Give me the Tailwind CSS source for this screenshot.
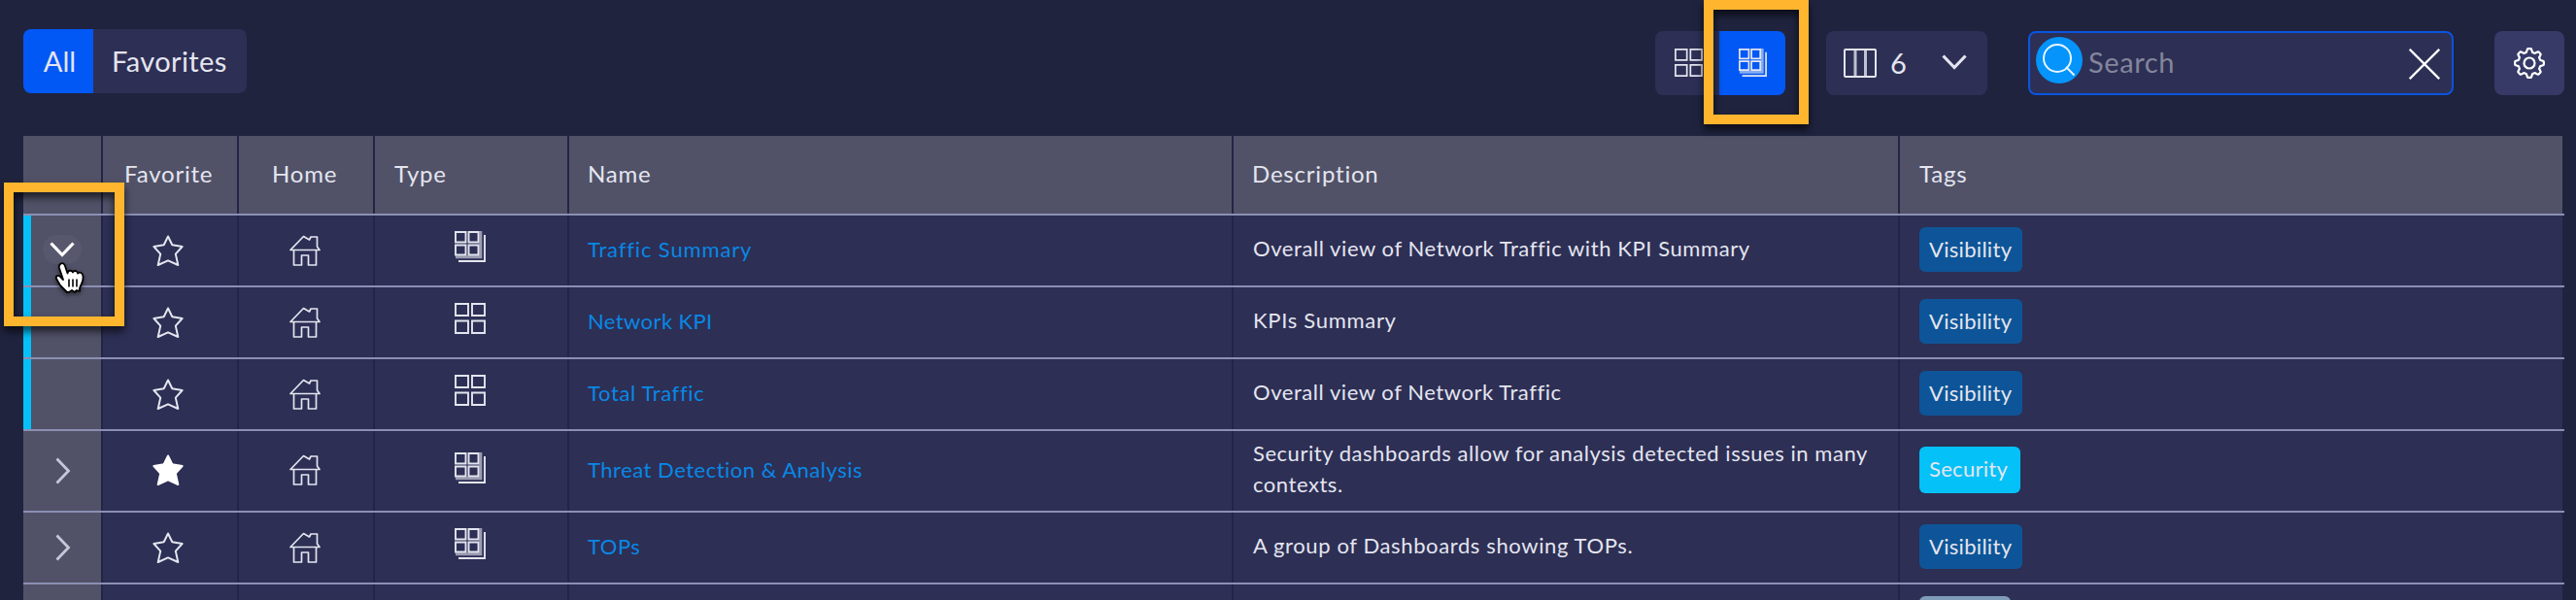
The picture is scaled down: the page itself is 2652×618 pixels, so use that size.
<!DOCTYPE html>
<html lang="en">
<head>
<meta charset="utf-8">
<title>Dashboards</title>
<script src="https://cdn.jsdelivr.net/npm/@tailwindcss/browser@4"></script>
</head>
<body class="bg-[#1f233e]">
<div class="relative h-[618px] w-[2652px] overflow-hidden bg-[#1f233e] font-[Lato,'Open_Sans',sans-serif] text-[#e4e5ef]">
<svg class="hidden">
  <defs>
    <symbol id="star" viewBox="0 0 32 32"><path d="M16 1.500 20.300 10.300 30.600 12 23.800 19.600 26.300 31 16 26.300 5.700 31 8.200 19.600 1.400 12 11.700 10.300Z" stroke="currentColor" stroke-width="2" stroke-linejoin="round"/></symbol>
    <symbol id="house" viewBox="0 0 32 32"><g fill="none" stroke="currentColor" stroke-width="1.700" stroke-linejoin="round" stroke-linecap="round"><path d="M1 15.500 14.500 1.500 20.500 5 22 2H28.500V12L31 15.500Z"/><path d="M4.500 16V31H12.500V21H19.500V31H27.500V16"/></g></symbol>
    <symbol id="grid" viewBox="0 0 32 32"><path d="M1 1H14V13H1ZM18 1H31V13H18ZM1 18.500H14V31H1ZM18 18.500H31V31H18Z" fill="none" stroke="currentColor" stroke-width="1.900"/></symbol>
    <symbol id="stack" viewBox="0 0 32 32"><g fill="none" stroke="currentColor" stroke-width="1.900"><path d="M1 1H11.500V11.500H1ZM14.500 1H24.500V11.500H14.500ZM1 14.500H11.500V24.500H1ZM14.500 14.500H24.500V24.500H14.500Z"/><path d="M26.800 0V26.800H1" stroke-width="3" stroke-opacity=".6"/><path d="M31 4V31H4"/></g></symbol>
    <symbol id="right" viewBox="0 0 16 28"><path d="M1.500 1.500 13.500 14 1.500 26.500" fill="none" stroke="currentColor" stroke-width="2.800"/></symbol>
    <symbol id="down" viewBox="0 0 26 16"><path d="M1.500 1.500 13 13.500 24.500 1.500" fill="none" stroke="currentColor" stroke-width="3.200"/></symbol>
  </defs>
</svg>

<header class="flex h-[140px] items-start pl-6 pt-[30px] text-[29px] leading-[66px]">
  <div class="flex h-[66px] overflow-hidden rounded-lg bg-[#2d2f55]">
    <button class="w-[72px] bg-[#0258f5] pl-[3px] text-center">All</button>
    <button class="w-[158px] pl-[19px] text-left tracking-[0.4px]">Favorites</button>
  </div>
  <div class="ml-[1450px] mt-0.5 flex h-[66px] overflow-hidden rounded-lg bg-[#2d2f55]">
    <button class="flex w-[66px] pl-5 pt-[18px]"><svg class="h-[29px] w-[29px]"><use href="#grid"/></svg></button>
    <button class="flex w-[68px] bg-[#0258f5] pl-5 pt-[18px]"><svg class="h-[29px] w-[29px]"><use href="#stack"/></svg></button>
  </div>
  <button class="ml-[42px] mt-0.5 flex h-[66px] w-[166px] rounded-lg bg-[#2d2f55] pl-[18px]">
    <svg class="mt-[18px] h-[30px] w-[34px]" viewBox="0 0 34 30" fill="none" stroke="currentColor" stroke-width="2"><rect x="1" y="1" width="32" height="28" rx="1"/><path d="M12 1V29M22.500 1V29" stroke-width="3" stroke-opacity=".8"/></svg>
    <span class="ml-[14px] w-[53px] text-left">6</span>
    <svg class="mt-[24px] h-4 w-[26px]"><use href="#down"/></svg>
  </button>
  <div class="ml-[42px] mt-0.5 flex h-[66px] w-[438px] rounded-lg border-2 border-[#0a55e0] bg-[#2d2f55]">
    <svg class="ml-1.5 mt-1 h-12 w-12 shrink-0" viewBox="0 0 48 48"><circle cx="24" cy="24" r="24" fill="#0494fb"/><g fill="none" stroke="#e8f5ff" stroke-width="2"><circle cx="22" cy="22" r="14"/><path d="M31 31 39.500 39.500"/></g></svg>
    <span class="ml-1.5 w-[330px] leading-[59px] tracking-[0.6px] text-[#83869b]">Search</span>
    <svg class="mt-4 h-8 w-8 shrink-0" viewBox="0 0 32 32" stroke="#fff" stroke-width="2.300"><path d="M.8.8 31.200 31.200M31.200.8.8 31.200"/></svg>
  </div>
  <button class="ml-[42px] mt-0.5 flex h-[66px] w-[72px] items-center justify-center rounded-lg bg-[#373a66]">
    <svg id="gear" class="h-8 w-8 text-white" viewBox="0 0 32 32" fill="none" stroke="currentColor" stroke-width="2.200" stroke-linejoin="round"><path id="teeth" d=""/><circle cx="16" cy="16" r="5.500"/></svg>
  </button>
</header>

<main id="table" class="ml-6 w-[2616px]">
  <div class="flex h-[82px] border-b-2 border-[#8c8fb3] text-[24px] leading-[77px] tracking-[0.8px]">
    <div class="w-[82px] border-r-2 border-[#232546] bg-[#515268]"></div>
    <div class="w-[140px] border-r-2 border-[#232546] bg-[#515268] pl-[22px]">Favorite</div>
    <div class="w-[140px] border-r-2 border-[#232546] bg-[#515268] pl-[34px]">Home</div>
    <div class="w-[200px] border-r-2 border-[#232546] bg-[#515268] pl-5">Type</div>
    <div class="w-[684px] border-r-2 border-[#232546] bg-[#515268] pl-[19px]">Name</div>
    <div class="w-[686px] border-r-2 border-[#232546] bg-[#515268] pl-[19px]">Description</div>
    <div class="w-[682px] bg-[#515268] pl-5">Tags</div>
  </div>
</main>

<template id="row">
  <div class="flex border-b-2 border-[#8c8fb3]">
    <div data-c="expand" class="w-[82px] border-r-2 border-[#232546] bg-[#515268]"></div>
    <div data-c="star" class="w-[140px] border-r-2 border-[#232546] bg-[#2d2f55] pl-[51px]"><svg class="h-8 w-8"><use href="#star"/></svg></div>
    <div data-c="home" class="w-[140px] border-r-2 border-[#232546] bg-[#2d2f55] pl-[52px]"><svg class="h-8 w-8"><use href="#house"/></svg></div>
    <div data-c="type" class="w-[200px] border-r-2 border-[#232546] bg-[#2d2f55] pl-[82px]"><svg class="h-8 w-8"><use/></svg></div>
    <div data-c="name" class="flex w-[684px] items-center border-r-2 border-[#232546] bg-[#2d2f55] pb-[3px] pl-[19px] text-[22px] text-[#0888e5]"><span></span></div>
    <div data-c="desc" class="flex w-[686px] items-center border-r-2 border-[#232546] bg-[#2d2f55] pb-[5px] pl-5 text-[22px] leading-8"><span></span></div>
    <div data-c="tag" class="w-[682px] bg-[#2d2f55] pl-5"><div class="rounded-md pl-2.5 text-[22px] tracking-[0.3px]"></div></div>
  </div>
</template>

<!-- Highlight frames and pointer float above the page -->
<div class="absolute left-[1754px] top-0 h-32 w-[108px] border-10 border-[#ffb52e] drop-shadow-[0_5px_4px_rgba(0,0,0,0.7)]"></div>
<div class="absolute left-1 top-[188px] h-[148px] w-[124px] border-10 border-[#ffb52e] drop-shadow-[0_5px_4px_rgba(0,0,0,0.7)]"></div>
<svg class="absolute left-[56px] top-[269px] h-[35px] w-[31px] drop-shadow-[0_2px_2px_rgba(0,0,0,0.5)]" viewBox="0 0 31 35"><path d="M6 3C8.500 1 10.500 3 11 5L13.500 12.500C14 9 18 9 19 11.500 20 9 24 10 24 12.500 26 10.500 29.500 12 29.500 16 30 22 27 24 26 28V31L23 30 21 32 18 30 15 32H13L6 25 2 18C1 14 5 14 7 17L9 19 5 7C4.500 5 5 4 6 3Z" fill="#fff" stroke="#000" stroke-width="1.800" stroke-linejoin="round"/><path d="M15 18.500V26.500M19 18.500V26.500M23 18.500V26.500" stroke="#000" stroke-width="1.600"/></svg>
</div>

<script>
const rows = [
  {h:74, open:1, bar:1, type:'stack', iy:20, ty:16, name:'Traffic Summary', desc:'Overall view of Network Traffic with KPI Summary', tag:'Visibility', ls:[.85,.58]},
  {h:74, bar:1, type:'grid', iy:20, ty:16, name:'Network KPI', desc:'KPIs Summary', tag:'Visibility', ls:[.4,.7]},
  {h:74, bar:1, type:'grid', iy:20, ty:16, name:'Total Traffic', desc:'Overall view of Network Traffic', tag:'Visibility', ls:[.65,.56]},
  {h:84, closed:1, fav:1, type:'stack', iy:24, ty:22, name:'Threat Detection & Analysis', desc:'Security dashboards allow for analysis detected issues in many<br>contexts.', tag:'Security', ls:[.5,.54]},
  {h:74, closed:1, type:'stack', iy:20, ty:16, name:'TOPs', desc:'A group of Dashboards showing TOPs.', tag:'Visibility', ls:[.5,.62]},
  {h:20, blank:1}
];
const tags = {
  Visibility:'mt-3 h-[46px] w-[106px] bg-[#0d5598] leading-[45px]',
  Security:'mt-4 h-12 w-[104px] bg-[#04c1f8] leading-[45px]'
};
const main = document.getElementById('table'), tpl = document.getElementById('row');
for (const r of rows) {
  const el = tpl.content.cloneNode(true).firstElementChild;
  const q = c => el.querySelector('[data-c=' + c + ']');
  el.style.height = r.h + 'px';
  if (r.blank) {
    ['star','home','type'].forEach(c => q(c).innerHTML = '');
    q('tag').firstElementChild.className = 'mt-3 h-[46px] w-[94px] rounded-md bg-[#7e9bb8]';
    main.append(el); continue;
  }
  const ex = q('expand');
  if (r.bar) ex.innerHTML = '<div class="flex h-full w-full border-l-8 border-[#04c1f8]">' + (r.open ? '<div class="ml-3 mt-[20px] flex h-[30px] w-10 justify-center rounded-full bg-white/4 pt-[7px]"><svg class="h-4 w-[26px] text-white"><use href="#down"/></svg></div>' : '') + '</div>';
  if (r.closed) ex.innerHTML = '<div class="flex h-full items-center pl-[33px]"><svg class="h-7 w-4 text-[#c6c8da]"><use href="#right"/></svg></div>';
  for (const c of ['star','home']) q(c).style.paddingTop = r.iy + 'px';
  q('star').firstElementChild.style.fill = r.fav ? '#fff' : 'none';
  if (r.fav) q('star').style.color = '#fff';
  q('type').style.paddingTop = r.ty + 'px';
  q('type').querySelector('use').setAttribute('href', '#' + r.type);
  q('name').firstElementChild.textContent = r.name;
  q('name').style.letterSpacing = r.ls[0] + 'px';
  q('desc').firstElementChild.innerHTML = r.desc;
  q('desc').style.letterSpacing = r.ls[1] + 'px';
  const t = q('tag').firstElementChild;
  t.className += ' ' + tags[r.tag];
  t.textContent = r.tag;
  main.append(el);
}
// Eight rounded gear teeth
let d = '';
for (let i = 0; i <= 96; i++) {
  const a = i / 96 * Math.PI * 2, k = Math.max(-1, Math.min(1, 1.8 * Math.cos(8 * a))), rad = 13.2 + 1.7 * k;
  d += (i ? 'L' : 'M') + (16 + rad * Math.sin(a)).toFixed(2) + ' ' + (16 - rad * Math.cos(a)).toFixed(2);
}
document.getElementById('teeth').setAttribute('d', d + 'Z');
</script>
</body>
</html>
